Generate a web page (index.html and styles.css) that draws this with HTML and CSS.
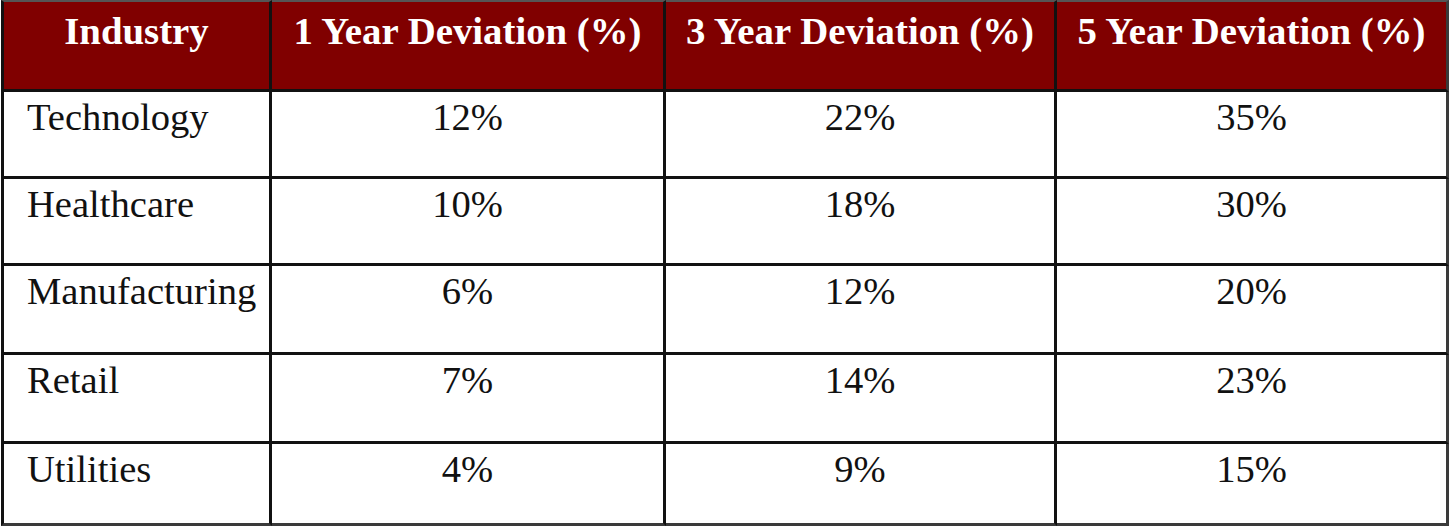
FILE: index.html
```html
<!DOCTYPE html>
<html lang="en">
<head>
<meta charset="utf-8">
<title>Industry Deviation</title>
<link rel="stylesheet" href="styles.css">
</head>
<body>
<table class="dev-table">
  <colgroup>
    <col class="c1">
    <col class="c2">
    <col class="c3">
    <col class="c4">
  </colgroup>
  <thead>
    <tr class="head-row">
      <th>Industry</th>
      <th>1 Year Deviation (%)</th>
      <th>3 Year Deviation (%)</th>
      <th>5 Year Deviation (%)</th>
    </tr>
  </thead>
  <tbody>
    <tr class="r1"><td class="name">Technology</td><td>12%</td><td>22%</td><td>35%</td></tr>
    <tr class="r2"><td class="name">Healthcare</td><td>10%</td><td>18%</td><td>30%</td></tr>
    <tr class="r3"><td class="name">Manufacturing</td><td>6%</td><td>12%</td><td>20%</td></tr>
    <tr class="r4"><td class="name">Retail</td><td>7%</td><td>14%</td><td>23%</td></tr>
    <tr class="r5"><td class="name">Utilities</td><td>4%</td><td>9%</td><td>15%</td></tr>
  </tbody>
</table>
</body>
</html>
```
FILE: styles.css
```css
html, body {
  margin: 0;
  padding: 0;
  background: #ffffff;
}

.dev-table {
  margin: 0 0 0 1px;
  border-collapse: separate;
  border-spacing: 0;
  table-layout: fixed;
  width: 1448px;
  font-family: "Liberation Serif", "Times New Roman", serif;
  color: #111111;
}

.c1 { width: 271px; }
.c2 { width: 394px; }
.c3 { width: 391px; }
.c4 { width: 392px; }

.dev-table th,
.dev-table td {
  box-sizing: border-box;
  border-right: 3px solid #111111;
  border-bottom: 3px solid #111111;
  vertical-align: top;
  text-align: center;
  padding: 4px 2px 0;
  line-height: 42px;
  white-space: nowrap;
}

.dev-table th:first-child,
.dev-table td:first-child {
  border-left: 3px solid #111111;
}

.dev-table tr > :last-child {
  border-right-color: #3a3a3a;
}

.dev-table tbody tr:last-child td {
  border-bottom-color: #3a3a3a;
}

.dev-table th {
  background: #800000;
  color: #ffffff;
  font-weight: bold;
  font-size: 38.8px;
  border-top: 2px solid #555555;
  padding-top: 8px;
}

.dev-table td {
  font-size: 38.6px;
  font-weight: normal;
}

.dev-table td.name {
  text-align: left;
  padding-left: 23px;
}

.head-row { height: 92px; }
.r1 { height: 87px; }
.r2 { height: 87px; }
.r3 { height: 89px; }
.r4 { height: 89px; }
.r5 { height: 82px; }
```
